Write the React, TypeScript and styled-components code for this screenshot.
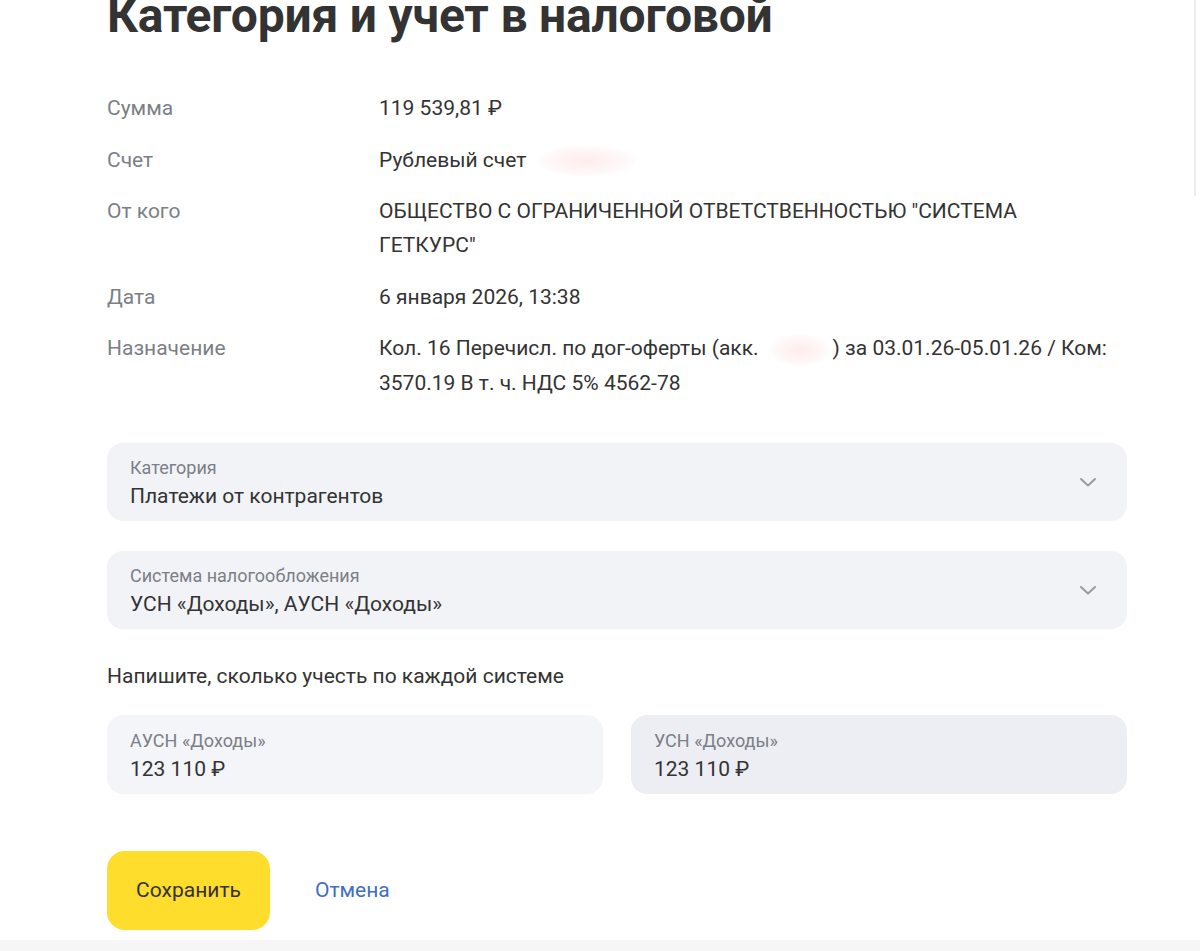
import React from "react";
import styled, { createGlobalStyle } from "styled-components";

const GlobalStyle = createGlobalStyle`
  html, body {
    margin: 0;
    padding: 0;
    background: #ffffff;
  }
  body {
    font-family: Roboto, "Liberation Sans", Arial, sans-serif;
    color: #333333;
    overflow: hidden;
  }
`;

const details = [
  { label: "Сумма", value: "119 539,81 ₽" },
  { label: "Счет", value: "Рублевый счет", hidden: "after" },
  {
    label: "От кого",
    value: 'ОБЩЕСТВО С ОГРАНИЧЕННОЙ ОТВЕТСТВЕННОСТЬЮ "СИСТЕМА ГЕТКУРС"',
  },
  { label: "Дата", value: "6 января 2026, 13:38" },
];

const Chevron: React.FC = () => (
  <svg width="18" height="12" viewBox="0 0 18 12" fill="none">
    <path
      d="M2 3l7 6.5L16 3"
      stroke="#959ba4"
      strokeWidth="2"
      strokeLinecap="round"
      strokeLinejoin="round"
    />
  </svg>
);

const App: React.FC = () => {
  return (
    <Page>
      <GlobalStyle />
      <Content>
        <Title>Категория и учет в налоговой</Title>
        <Details>
          {details.map((d) => (
            <React.Fragment key={d.label}>
              <Label>{d.label}</Label>
              <Value>
                {d.value}
                {d.hidden && <Smudge $w={100} />}
              </Value>
            </React.Fragment>
          ))}
          <Label>Назначение</Label>
          <Value>
            Кол. 16 Перечисл. по дог-оферты (акк.
            <Smudge $w={62} />) за 03.01.26-05.01.26 / Ком: 3570.19 В т. ч.
            НДС 5% 4562-78
          </Value>
        </Details>

        <Select>
          <FieldText>
            <FieldLabel>Категория</FieldLabel>
            <FieldValue>Платежи от контрагентов</FieldValue>
          </FieldText>
          <Chevron />
        </Select>
        <Select $gap>
          <FieldText>
            <FieldLabel>Система налогообложения</FieldLabel>
            <FieldValue>УСН «Доходы», АУСН «Доходы»</FieldValue>
          </FieldText>
          <Chevron />
        </Select>

        <Hint>Напишите, сколько учесть по каждой системе</Hint>
        <Inputs>
          <Input>
            <FieldLabel>АУСН «Доходы»</FieldLabel>
            <FieldValue>123 110 ₽</FieldValue>
          </Input>
          <Input $active>
            <FieldLabel>УСН «Доходы»</FieldLabel>
            <FieldValue>123 110 ₽</FieldValue>
          </Input>
        </Inputs>

        <Actions>
          <SaveBtn>Сохранить</SaveBtn>
          <CancelBtn>Отмена</CancelBtn>
        </Actions>
      </Content>
      <Footer />
      <EdgeLine />
    </Page>
  );
};

export default App;

const Page = styled.div`
  position: relative;
  width: 1200px;
  height: 951px;
  overflow: hidden;
  background: #ffffff;
  display: flex;
  flex-direction: column;
`;

const Content = styled.div`
  padding-left: 107px;
  width: 1020px;
  flex: 1;
`;

const Title = styled.h1`
  margin: -12px 0 0;
  font-size: 48px;
  line-height: 56px;
  font-weight: 700;
  color: #333333;
  letter-spacing: -0.2px;
`;

const Details = styled.div`
  display: grid;
  grid-template-columns: 272px 728px;
  row-gap: 17.5px;
  margin-top: 47px;
  font-size: 21px;
  line-height: 34px;
`;

const Label = styled.div`
  color: #7b7f86;
`;

const Value = styled.div`
  color: #333333;
`;

const Smudge = styled.span<{ $w: number }>`
  display: inline-block;
  width: ${(p) => p.$w}px;
  height: 32px;
  vertical-align: middle;
  margin: 0 2px 0 10px;
  border-radius: 50%;
  background: radial-gradient(
    ellipse at center,
    rgba(255, 220, 220, 0.55) 0%,
    rgba(255, 235, 235, 0.35) 55%,
    rgba(255, 255, 255, 0) 75%
  );
`;

const Select = styled.div<{ $gap?: boolean }>`
  margin-top: ${(p) => (p.$gap ? 30 : 43)}px;
  height: 78px;
  box-sizing: border-box;
  border-radius: 16px;
  background: #f2f3f7;
  padding: 13px 30px 0 23px;
  display: flex;
  justify-content: space-between;
  align-items: flex-start;

  svg {
    margin-top: 20px;
  }
`;

const FieldText = styled.div`
  display: flex;
  flex-direction: column;
`;

const FieldLabel = styled.div`
  font-size: 18px;
  line-height: 24px;
  color: #7b7f86;
`;

const FieldValue = styled.div`
  font-size: 21px;
  line-height: 32px;
  color: #333333;
`;

const Hint = styled.div`
  margin-top: 34px;
  font-size: 21px;
  line-height: 26px;
  color: #333333;
`;

const Inputs = styled.div`
  display: grid;
  grid-template-columns: 1fr 1fr;
  column-gap: 28px;
  margin-top: 26px;
`;

const Input = styled.div<{ $active?: boolean }>`
  height: 79px;
  box-sizing: border-box;
  border-radius: 16px;
  padding: 14px 23px 0;
  background: ${(p) => (p.$active ? "#eceef3" : "#f4f5f8")};
`;

const Actions = styled.div`
  display: flex;
  align-items: center;
  gap: 45px;
  margin-top: 57px;
`;

const SaveBtn = styled.button`
  width: 163px;
  height: 79px;
  border: 0;
  border-radius: 18px;
  background: #ffdd2d;
  color: #333333;
  font-family: inherit;
  font-size: 21px;
`;

const CancelBtn = styled.button`
  border: 0;
  background: none;
  padding: 0;
  color: #3e6fc4;
  font-family: inherit;
  font-size: 21px;
`;

const Footer = styled.div`
  height: 11px;
  background: #f6f6f6;
`;

const EdgeLine = styled.div`
  position: absolute;
  right: 4px;
  top: 0;
  width: 2px;
  height: 196px;
  background: #ececec;
  border-radius: 0 0 2px 2px;
`;
